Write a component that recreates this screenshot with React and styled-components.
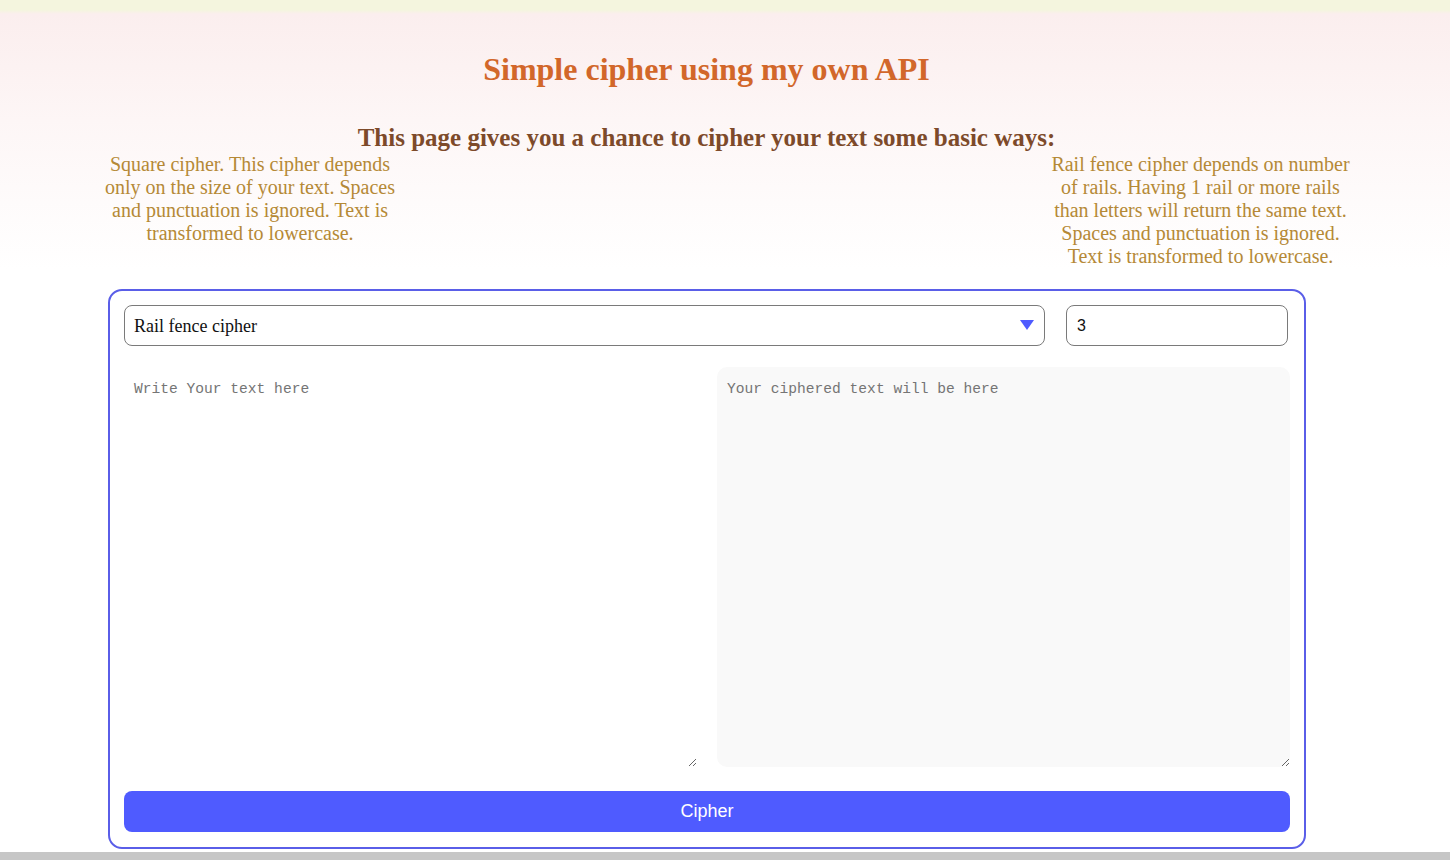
import React, { useState } from "react";
import styled, { createGlobalStyle } from "styled-components";

const Global = createGlobalStyle`
  html, body {
    margin: 0;
    padding: 0;
  }
  body {
    font-family: "Liberation Serif", "Times New Roman", serif;
    background: #ffffff;
  }
`;

const Page = styled.div`
  width: 1450px;
  height: 860px;
  overflow: hidden;
  display: flex;
  flex-direction: column;
  background: linear-gradient(
    to bottom,
    #f4f5de 0px,
    #f4f5de 10px,
    #fbeeee 14px,
    #fdf6f6 120px,
    #ffffff 270px
  );
`;

const Content = styled.main`
  width: 1413px;
  flex-shrink: 0;
  display: flex;
  flex-direction: column;
`;

const Title = styled.h1`
  margin: 49px 0 0;
  text-align: center;
  font-size: 32px;
  line-height: 40px;
  font-weight: 700;
  color: #d2672a;
`;

const Subtitle = styled.h2`
  margin: 34px 0 0;
  text-align: center;
  font-size: 25px;
  line-height: 30px;
  font-weight: 700;
  color: #7d4a2a;
`;

const Notes = styled.div`
  display: flex;
  justify-content: space-between;
  padding: 0 60px 0 100px;
  height: 136px;
`;

const Note = styled.p`
  margin: 0;
  width: ${(p) => p.$w}px;
  text-align: center;
  font-size: 20px;
  line-height: 23px;
  color: #b58936;
`;

const Card = styled.form`
  margin: 0 0 0 108px;
  width: 1198px;
  height: 560px;
  flex-shrink: 0;
  box-sizing: border-box;
  border: 2px solid #5a5ee8;
  border-radius: 14px;
  padding: 14px;
  display: flex;
  flex-direction: column;
  background: #ffffff;
`;

const TopRow = styled.div`
  display: flex;
  gap: 21px;
  height: 41px;
`;

const SelectWrap = styled.div`
  position: relative;
  flex: 0 0 921px;
`;

const Select = styled.select`
  appearance: none;
  width: 100%;
  height: 41px;
  box-sizing: border-box;
  border: 1px solid #7a7a7a;
  border-radius: 8px;
  background: #ffffff;
  padding: 0 9px;
  font-family: "Liberation Serif", "Times New Roman", serif;
  font-size: 18px;
  color: #111;
  outline: none;
`;

const Arrow = styled.span`
  position: absolute;
  right: 11px;
  top: 15px;
  width: 0;
  height: 0;
  border-left: 7px solid transparent;
  border-right: 7px solid transparent;
  border-top: 10px solid #4f5bff;
  pointer-events: none;
`;

const NumberInput = styled.input`
  width: 222px;
  height: 41px;
  box-sizing: border-box;
  border: 1px solid #7a7a7a;
  border-radius: 8px;
  padding: 0 10px;
  font-family: "Liberation Sans", Arial, sans-serif;
  font-size: 16px;
  color: #111;
  outline: none;
`;

const TextRow = styled.div`
  display: flex;
  gap: 20px;
  margin-top: 21px;
  height: 400px;
`;

const Area = styled.textarea`
  flex: 0 0 573px;
  height: 400px;
  box-sizing: border-box;
  border: none;
  border-radius: 10px;
  padding: 13px 10px;
  background: ${(p) => (p.$out ? "#f9f9f9" : "#ffffff")};
  font-family: "Liberation Mono", "DejaVu Sans Mono", monospace;
  font-size: 14.6px;
  line-height: 18px;
  color: #333;
  outline: none;
  &::placeholder {
    color: #757575;
  }
`;

const Button = styled.button`
  margin-top: 24px;
  height: 41px;
  border: none;
  border-radius: 8px;
  background: #4f5bff;
  color: #ffffff;
  font-family: "Liberation Sans", Arial, sans-serif;
  font-size: 18px;
  cursor: pointer;
`;

const BottomBar = styled.div`
  margin-top: 3px;
  height: 8px;
  flex-shrink: 0;
  background: #c6c6c6;
`;

export default function App() {
  const [kind, setKind] = useState("rail");
  const [rails, setRails] = useState("3");

  return (
    <>
      <Global />
      <Page>
        <Content>
          <Title>Simple cipher using my own API</Title>
          <Subtitle>
            This page gives you a chance to cipher your text some basic ways:
          </Subtitle>
          <Notes>
            <Note $w={300}>
              Square cipher. This cipher depends only on the size of your text.
              Spaces and punctuation is ignored. Text is transformed to
              lowercase.
            </Note>
            <Note $w={305}>
              Rail fence cipher depends on number of rails. Having 1 rail or
              more rails than letters will return the same text. Spaces and
              punctuation is ignored. Text is transformed to lowercase.
            </Note>
          </Notes>
          <Card onSubmit={(e) => e.preventDefault()}>
            <TopRow>
              <SelectWrap>
                <Select value={kind} onChange={(e) => setKind(e.target.value)}>
                  <option value="square">Square cipher</option>
                  <option value="rail">Rail fence cipher</option>
                </Select>
                <Arrow />
              </SelectWrap>
              <NumberInput
                type="text"
                value={rails}
                onChange={(e) => setRails(e.target.value)}
              />
            </TopRow>
            <TextRow>
              <Area placeholder="Write Your text here" />
              <Area
                $out
                placeholder="Your ciphered text will be here"
                readOnly
              />
            </TextRow>
            <Button type="submit">Cipher</Button>
          </Card>
        </Content>
        <BottomBar />
      </Page>
    </>
  );
}
